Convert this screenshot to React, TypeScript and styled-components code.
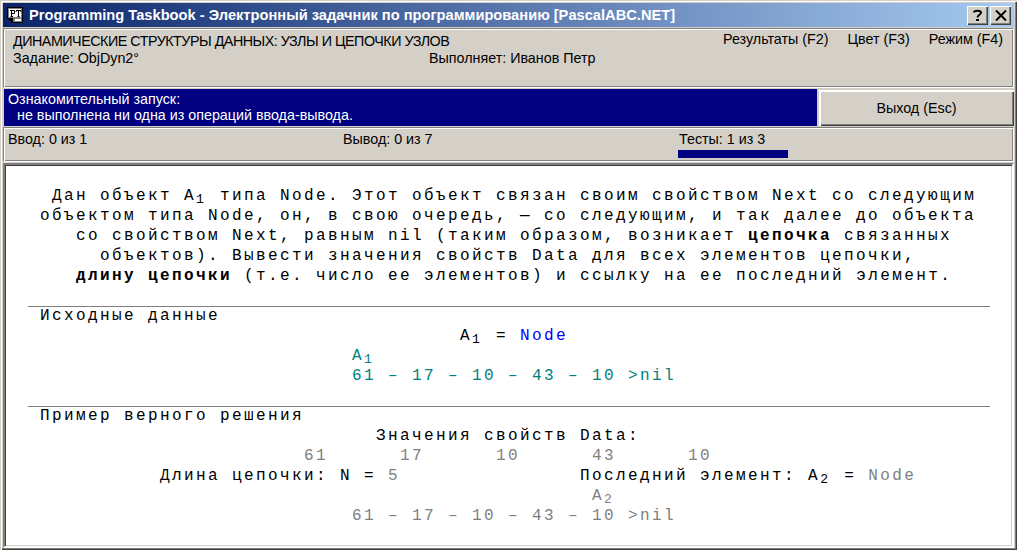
import React from "react";
import styled, { createGlobalStyle } from "styled-components";

const GlobalStyle = createGlobalStyle`
    html, body {
        margin: 0;
        padding: 0;
        background: #d4d0c8;
    }
`;

const Win = styled.div`
    width: 1017px;
    height: 550px;
    box-sizing: border-box;
    padding: 3px 3px 2px;
    background: #d4d0c8;
    display: flex;
    flex-direction: column;
    font-family: "Liberation Sans", Arial, sans-serif;
    font-size: 14.3px;
    color: #000;
    box-shadow: inset 1px 1px 0 #d4d0c8, inset 2px 2px 0 #fff, inset -1px -1px 0 #404040, inset -2px -2px 0 #808080;
    overflow: hidden;
`;

const TitleBar = styled.div`
    height: 24px;
    flex: none;
    display: flex;
    align-items: center;
    padding: 0 3px 0 4px;
    background: linear-gradient(90deg, #0a246a, #a6caf0);
    color: #fff;
    font-weight: bold;
    font-size: 14.67px;
`;

const TitleText = styled.span`
    margin-left: 5px;
    flex: 1;
    white-space: nowrap;
`;

const CaptionButton = styled.div`
    width: 21px;
    height: 19px;
    margin-left: 2px;
    box-sizing: border-box;
    background: #d4d0c8;
    box-shadow: inset 1px 1px 0 #fff, inset -1px -1px 0 #404040, inset -2px -2px 0 #808080;
    display: flex;
    align-items: center;
    justify-content: center;
`;

const EtchedPanel = styled.div`
    flex: none;
    box-sizing: border-box;
    border: 1px solid;
    border-color: #808080 #fff #fff #808080;
    box-shadow: inset 1px 1px 0 #fff, inset -1px -1px 0 #808080;
`;

const HeaderPanel = styled(EtchedPanel)`
    height: 60px;
    margin-top: 1px;
    padding: 4px 9px 0;
    display: grid;
    grid-template-columns: 416px 1fr auto;
    grid-template-rows: 17px 17px;
    line-height: 17px;
`;

const Menu = styled.div`
    display: flex;
    gap: 19px;
    margin: -2px 1px 0 0;
`;

const NoWrapCell = styled.div`
    white-space: nowrap;
`;

const TopicCell = styled(NoWrapCell)`
    letter-spacing: -0.48px;
`;

const MessageRow = styled.div`
    height: 37px;
    flex: none;
    margin-top: 1px;
    display: flex;
`;

const Message = styled.div`
    width: 813px;
    margin-left: 1px;
    background: #000080;
    color: #fff;
    padding: 2px 4px 0;
    box-sizing: border-box;
    line-height: 16px;
    white-space: nowrap;
`;

const MessageLine = styled.div<{ $indent?: number }>`
    padding-left: ${(p) => p.$indent ?? 0}px;
`;

const ExitButton = styled.div`
    flex: 1;
    margin: 1px 0 0 2px;
    background: #d4d0c8;
    display: flex;
    align-items: center;
    justify-content: center;
    box-shadow: inset 1px 1px 0 #fff, inset 2px 2px 0 #fff, inset -1px -1px 0 #404040, inset -2px -2px 0 #808080;
`;

const StatsPanel = styled(EtchedPanel)`
    height: 35px;
    margin-top: 1px;
    padding: 3px 3px 0 4px;
    display: grid;
    grid-template-columns: 335px 336px 1fr;
    line-height: 16px;
`;

const Stat = styled.div`
    display: flex;
    flex-direction: column;
`;

const Progress = styled.div`
    width: 110px;
    height: 8px;
    margin: 3px 0 0 -1px;
    background: #000080;
`;

const TextPanel = styled.div`
    flex: 1;
    margin-top: 1px;
    background: #fff;
    box-sizing: border-box;
    border: 2px solid;
    border-color: #808080 #fff #fff #808080;
    box-shadow: inset 1px 1px 0 #404040, inset -1px -1px 0 #d4d0c8;
    padding: 21px 22px 0 23px;
    font-family: "Liberation Mono", "Courier New", monospace;
    font-size: 16px;
    letter-spacing: 2.4px;
`;

const Line = styled.div`
    height: 20px;
    line-height: 20px;
    padding-left: 12px;
    white-space: pre;
    font-variant-ligatures: none;
`;

const Section = styled.div`
    margin-top: 20px;
    border-top: 1px solid #808080;
    & > ${Line}:first-child {
        margin-top: -1px;
    }
`;

const Sub = styled.span`
    display: inline-block;
    width: 12px;
    font-size: 13px;
    letter-spacing: 0;
    position: relative;
    top: 3px;
    line-height: 1;
`;

const Teal = styled.span`
    color: #008080;
`;

const Blue = styled.span`
    color: #0000ff;
`;

const Gray = styled.span`
    color: #808080;
`;

const AppIcon = () => (
    <svg width="17" height="17" viewBox="0 0 17 17">
        <path d="M0 0H16V16H5L0 11Z" fill="#000" />
        <path d="M1 1H15V15H6L6 11H1Z" fill="#808080" />
        <rect x="2" y="2" width="12" height="8" fill="#fff" />
        <path d="M3 3.5H7.5V6.5H5M4.5 3V9M3.5 9.5H6M9 3.5H14M9 4V5M14 4V5M11.5 3V9M10.5 9.5H12.5" stroke="#000" strokeWidth="1" fill="none" />
        <rect x="8" y="12" width="6" height="2" fill="#fff" />
    </svg>
);

export default function App() {
    return (
        <Win>
            <GlobalStyle />
            <TitleBar>
                <AppIcon />
                <TitleText>Programming Taskbook - Электронный задачник по программированию [PascalABC.NET]</TitleText>
                <CaptionButton>
                    <svg width="9" height="12" viewBox="0 0 9 12">
                        <path d="M1 3.5C1 1 8 1 8 3.5C8 6 4.5 5.5 4.5 8.5" stroke="#000" strokeWidth="2" fill="none" />
                        <rect x="3" y="10" width="3" height="2" fill="#000" />
                    </svg>
                </CaptionButton>
                <CaptionButton>
                    <svg width="12" height="11" viewBox="0 0 12 11">
                        <path d="M1 0.5L11 10.5M11 0.5L1 10.5" stroke="#000" strokeWidth="2" fill="none" />
                    </svg>
                </CaptionButton>
            </TitleBar>
            <HeaderPanel>
                <TopicCell>ДИНАМИЧЕСКИЕ СТРУКТУРЫ ДАННЫХ: УЗЛЫ И ЦЕПОЧКИ УЗЛОВ</TopicCell>
                <div />
                <Menu>
                    <span>Результаты (F2)</span>
                    <span>Цвет (F3)</span>
                    <span>Режим (F4)</span>
                </Menu>
                <NoWrapCell>Задание: ObjDyn2°</NoWrapCell>
                <NoWrapCell>Выполняет: Иванов Петр</NoWrapCell>
            </HeaderPanel>
            <MessageRow>
                <Message>
                    <MessageLine>Ознакомительный запуск:</MessageLine>
                    <MessageLine $indent={9}>не выполнена ни одна из операций ввода-вывода.</MessageLine>
                </Message>
                <ExitButton>Выход (Esc)</ExitButton>
            </MessageRow>
            <StatsPanel>
                <Stat>Ввод: 0 из 1</Stat>
                <Stat>Вывод: 0 из 7</Stat>
                <Stat>
                    Тесты: 1 из 3
                    <Progress />
                </Stat>
            </StatsPanel>
            <TextPanel>
                <Line> Дан объект A<Sub>1</Sub> типа Node. Этот объект связан своим свойством Next со следующим</Line>
                <Line>объектом типа Node, он, в свою очередь, — со следующим, и так далее до объекта</Line>
                <Line>   со свойством Next, равным nil (таким образом, возникает <b>цепочка</b> связанных</Line>
                <Line>     объектов). Вывести значения свойств Data для всех элементов цепочки,</Line>
                <Line>   <b>длину цепочки</b> (т.е. число ее элементов) и ссылку на ее последний элемент.</Line>
                <Section>
                    <Line>Исходные данные</Line>
                    <Line>{" ".repeat(35)}A<Sub>1</Sub> = <Blue>Node</Blue></Line>
                    <Line>{" ".repeat(26)}<Teal>A<Sub>1</Sub></Teal></Line>
                    <Line>{" ".repeat(26)}<Teal>61 – 17 – 10 – 43 – 10 &gt;nil</Teal></Line>
                </Section>
                <Section>
                    <Line>Пример верного решения</Line>
                    <Line>{" ".repeat(28)}Значения свойств Data:</Line>
                    <Line>{" ".repeat(22)}<Gray>61      17      10      43      10</Gray></Line>
                    <Line>{" ".repeat(10)}Длина цепочки: N = <Gray>5</Gray>{" ".repeat(15)}Последний элемент: A<Sub>2</Sub> = <Gray>Node</Gray></Line>
                    <Line>{" ".repeat(46)}<Gray>A<Sub>2</Sub></Gray></Line>
                    <Line>{" ".repeat(26)}<Gray>61 – 17 – 10 – 43 – 10 &gt;nil</Gray></Line>
                </Section>
            </TextPanel>
        </Win>
    );
}
